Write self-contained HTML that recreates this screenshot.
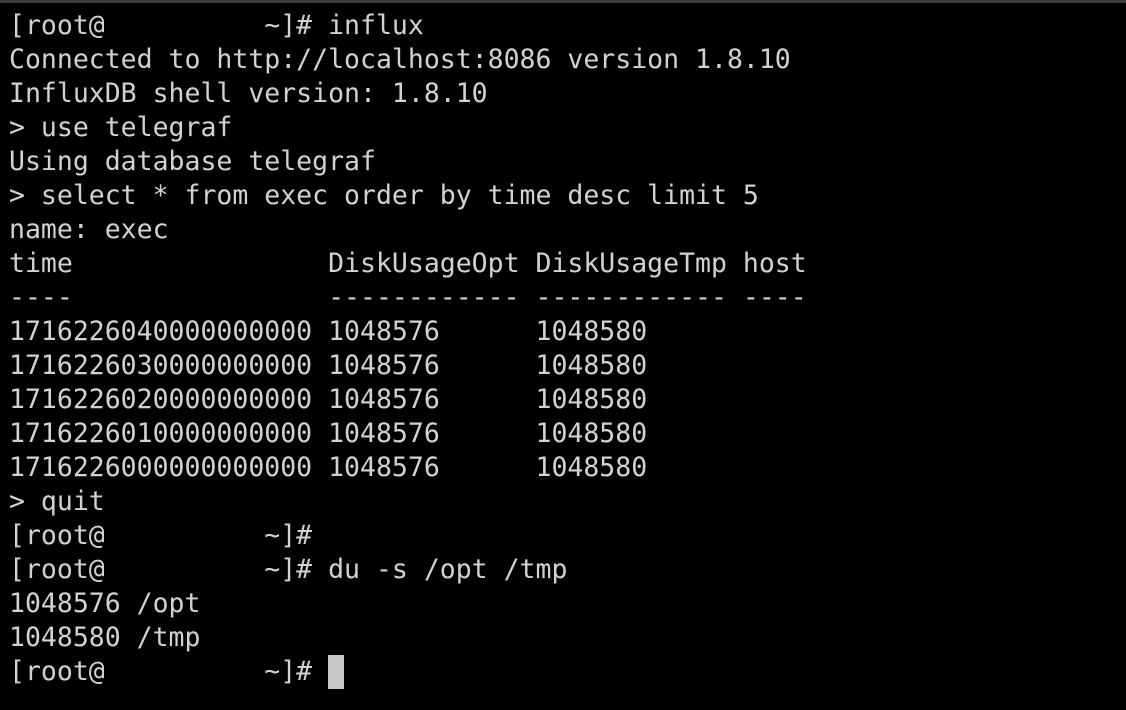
<!DOCTYPE html>
<html><head><meta charset="utf-8"><style>
html,body{margin:0;padding:0;background:#000;width:1126px;height:710px;overflow:hidden}
.bar{position:absolute;left:0;top:0;width:1126px;height:3px;background:#3a3a3a}
pre{position:absolute;left:9px;top:9px;margin:0;font-family:"DejaVu Sans Mono","Liberation Mono",monospace;font-size:26.5px;line-height:34px;color:#d2d2d2}
.cur{display:inline-block;width:16px;height:34px;background:#c8c8c8;vertical-align:top}
</style></head><body><div class="bar"></div>
<pre>[root@          ~]# influx
Connected to http://localhost:8086 version 1.8.10
InfluxDB shell version: 1.8.10
&gt; use telegraf
Using database telegraf
&gt; select * from exec order by time desc limit 5
name: exec
time                DiskUsageOpt DiskUsageTmp host
----                ------------ ------------ ----
1716226040000000000 1048576      1048580
1716226030000000000 1048576      1048580
1716226020000000000 1048576      1048580
1716226010000000000 1048576      1048580
1716226000000000000 1048576      1048580
&gt; quit
[root@          ~]#
[root@          ~]# du -s /opt /tmp
1048576 /opt
1048580 /tmp
[root@          ~]# <span class="cur"></span></pre>
</body></html>
